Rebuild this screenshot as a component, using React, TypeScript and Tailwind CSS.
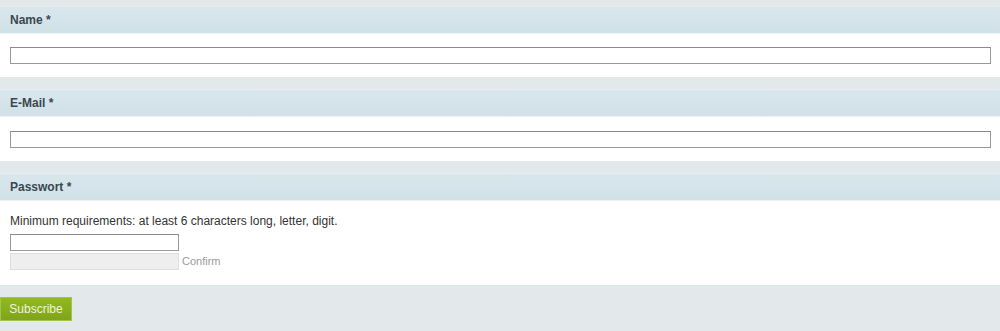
import React from 'react';

const Header: React.FC<{ label: string }> = ({ label }) => (
    <div className="h-[28px] border-t border-[#e4edf1] border-b border-b-[#eef4f6] bg-gradient-to-b from-[#d9e7ed] to-[#d1e1e8] pl-[10px] flex items-center text-[12px] font-bold text-[#3b474e]">
        {label}
    </div>
);

const TextInput: React.FC<{ className?: string }> = ({ className = '' }) => (
    <input
        type="text"
        className={`block h-[17px] border border-[#999999] border-t-[#8a8a8a] bg-white outline-none ${className}`}
    />
);

export default function App() {
    return (
        <div className="w-[1000px] h-[331px] bg-[#e3e8eb] font-['Liberation_Sans',Arial,sans-serif] overflow-hidden">
            <div className="h-[6px]" />

            {/* Name */}
            <Header label="Name *" />
            <div className="bg-white px-[10px] pt-[13px] pb-[13px]">
                <TextInput className="w-[981px]" />
            </div>

            <div className="h-[12px]" />

            {/* E-Mail */}
            <Header label="E-Mail *" />
            <div className="bg-white px-[10px] pt-[14px] pb-[13px]">
                <TextInput className="w-[981px]" />
            </div>

            <div className="h-[12px]" />

            {/* Passwort */}
            <Header label="Passwort *" />
            <div className="bg-white px-[10px] pt-[13px] pb-[15px]">
                <p className="text-[12px] leading-[14px] text-[#333333] mb-[6px]">
                    Minimum requirements: at least 6 characters long, letter, digit.
                </p>
                <TextInput className="w-[169px]" />
                <div className="flex items-center mt-[2px]">
                    <input
                        type="text"
                        disabled
                        className="block w-[169px] h-[17px] border border-[#dddddd] bg-[#eeeeee] outline-none"
                    />
                    <span className="ml-[3px] text-[11px] text-[#9a9a9a]">Confirm</span>
                </div>
            </div>

            <div className="border-t border-[#d8e5eb] pt-[10px]">
                <button className="h-[24px] w-[72px] bg-gradient-to-b from-[#93b823] to-[#7fa41a] border border-[#a3c34a] text-[12px] text-[#eef5dc]">
                    Subscribe
                </button>
            </div>
        </div>
    );
}
